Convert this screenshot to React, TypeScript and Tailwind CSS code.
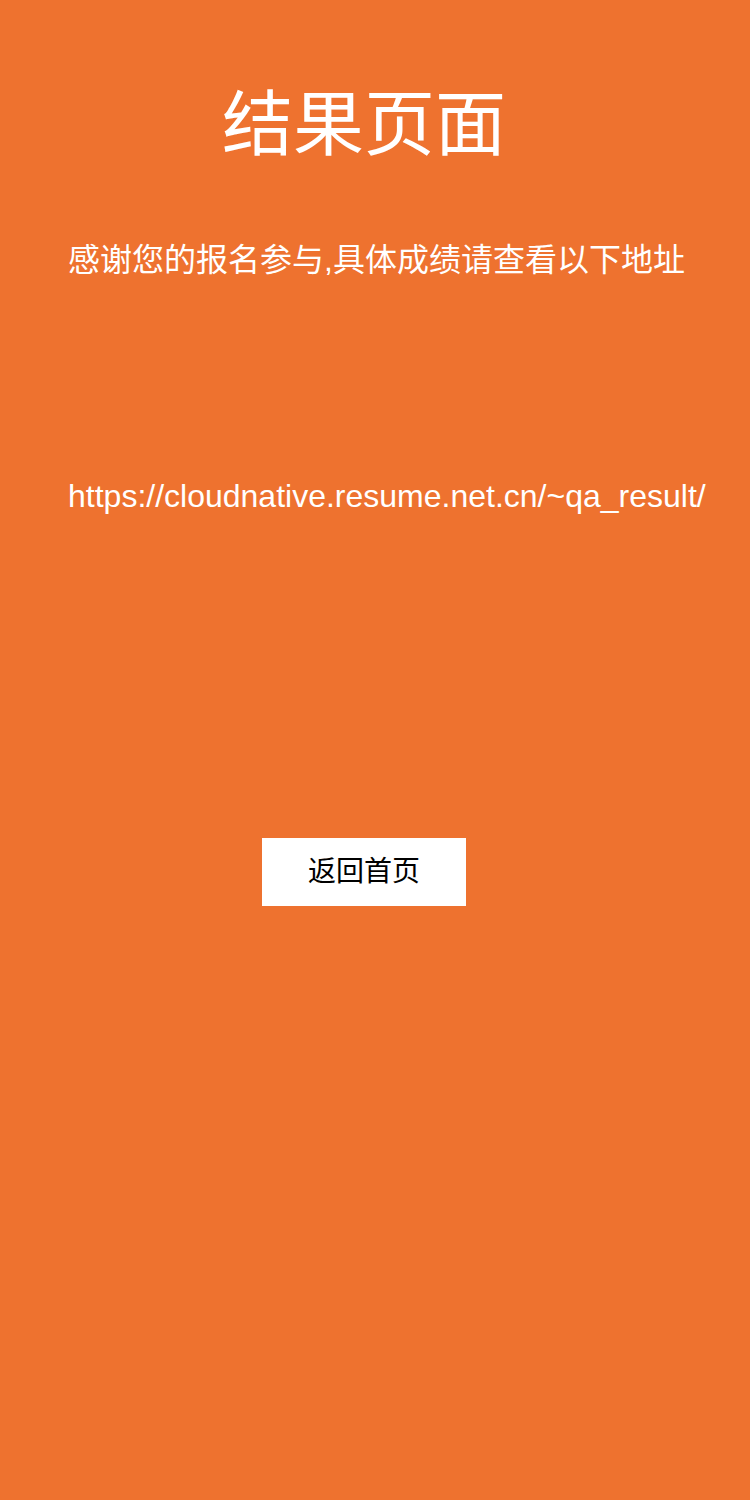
export default function App() {
  return (
    <div className="min-h-[1500px] w-full bg-[#ee722f] font-['Liberation_Sans','Noto_Sans_CJK_SC',sans-serif]">
      <div className="flex w-[660px] flex-col pl-[68px] pt-[89px]">
        <h1 className="h-[72px] whitespace-nowrap text-center text-[71px] leading-[72px] font-normal text-white">
          结果页面
        </h1>
        <p className="mt-[83px] h-[32px] whitespace-nowrap text-[32px] leading-[32px] text-white">
          感谢您的报名参与,具体成绩请查看以下地址
        </p>
        <p className="mt-[204px] h-[32px] whitespace-nowrap text-[32px] leading-[32px] text-white">
          https://cloudnative.resume.net.cn/~qa_result/
        </p>
        <div className="mt-[326px] flex justify-center">
          <button className="h-[68px] w-[204px] bg-white text-[28px] leading-none text-black">
            返回首页
          </button>
        </div>
      </div>
    </div>
  );
}
